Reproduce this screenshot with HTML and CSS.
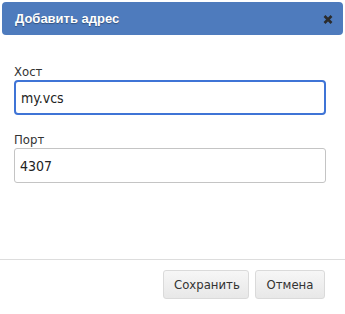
FILE: index.html
```html
<!DOCTYPE html>
<html lang="ru">
<head>
<meta charset="utf-8">
<title>Добавить адрес</title>
<link rel="stylesheet" href="styles.css">
</head>
<body>
<div class="modal">
  <div class="header">
    <span class="title">Добавить адрес</span>
    <span class="close" aria-label="Закрыть">
      <svg width="10" height="9" viewBox="0 0 10 9"><path d="M1.5 1 L8.5 8 M8.5 1 L1.5 8" stroke="#2b2b2b" stroke-width="2.6" stroke-linecap="butt"/></svg>
    </span>
  </div>
  <div class="content">
    <div class="field">
      <label class="label">Хост</label>
      <div class="input focused">my.vcs</div>
    </div>
    <div class="field">
      <label class="label">Порт</label>
      <div class="input">4307</div>
    </div>
  </div>
  <div class="footer">
    <button class="btn btn-save">Сохранить</button>
    <button class="btn btn-cancel">Отмена</button>
  </div>
</div>
</body>
</html>
```
FILE: styles.css
```css
html, body {
  margin: 0;
  padding: 0;
  background: #ffffff;
}
body {
  font-family: "DejaVu Sans Condensed", "DejaVu Sans", sans-serif;
  color: #333333;
}
.modal {
  width: 345px;
  height: 314px;
  display: flex;
  flex-direction: column;
}
.header {
  margin: 2px 2px 0 2px;
  height: 33px;
  box-sizing: border-box;
  background: #4e7bbd;
  border-radius: 4px;
  display: flex;
  align-items: center;
  justify-content: space-between;
  padding: 0 10px 0 13px;
}
.title {
  font-family: "Liberation Sans", Arial, sans-serif;
  font-weight: bold;
  font-size: 13px;
  color: #ffffff;
  text-shadow: 0 1px 1px rgba(0, 0, 0, 0.35);
}
.close {
  display: flex;
  width: 10px;
  height: 9px;
  margin-top: 1px;
}
.content {
  padding: 29px 19px 0 14px;
  display: flex;
  flex-direction: column;
  gap: 17px;
  height: 224px;
  box-sizing: border-box;
}
.field {
  display: flex;
  flex-direction: column;
}
.label {
  font-size: 13px;
  line-height: 16px;
  height: 16px;
  color: #333333;
}
.input {
  height: 35px;
  box-sizing: border-box;
  border: 1px solid #c4c4c4;
  border-radius: 3px;
  padding: 0 5px;
  display: flex;
  align-items: center;
  font-size: 14px;
  color: #222222;
}
.input.focused {
  border: 2px solid #3f74d6;
  border-radius: 4px;
  padding: 0 5px;
}
.footer {
  border-top: 1px solid #dddddd;
  padding: 10px 20px 0 0;
  display: flex;
  justify-content: flex-end;
  gap: 6px;
}
.btn {
  height: 29px;
  box-sizing: border-box;
  border: 1px solid #dadada;
  border-radius: 3px;
  background: linear-gradient(#f6f6f6, #e8e8e8);
  font-family: "DejaVu Sans Condensed", "DejaVu Sans", sans-serif;
  font-size: 13px;
  color: #333333;
  padding: 0 10px;
}
.btn-save {
  width: 86px;
}
.btn-cancel {
  width: 70px;
}
```
